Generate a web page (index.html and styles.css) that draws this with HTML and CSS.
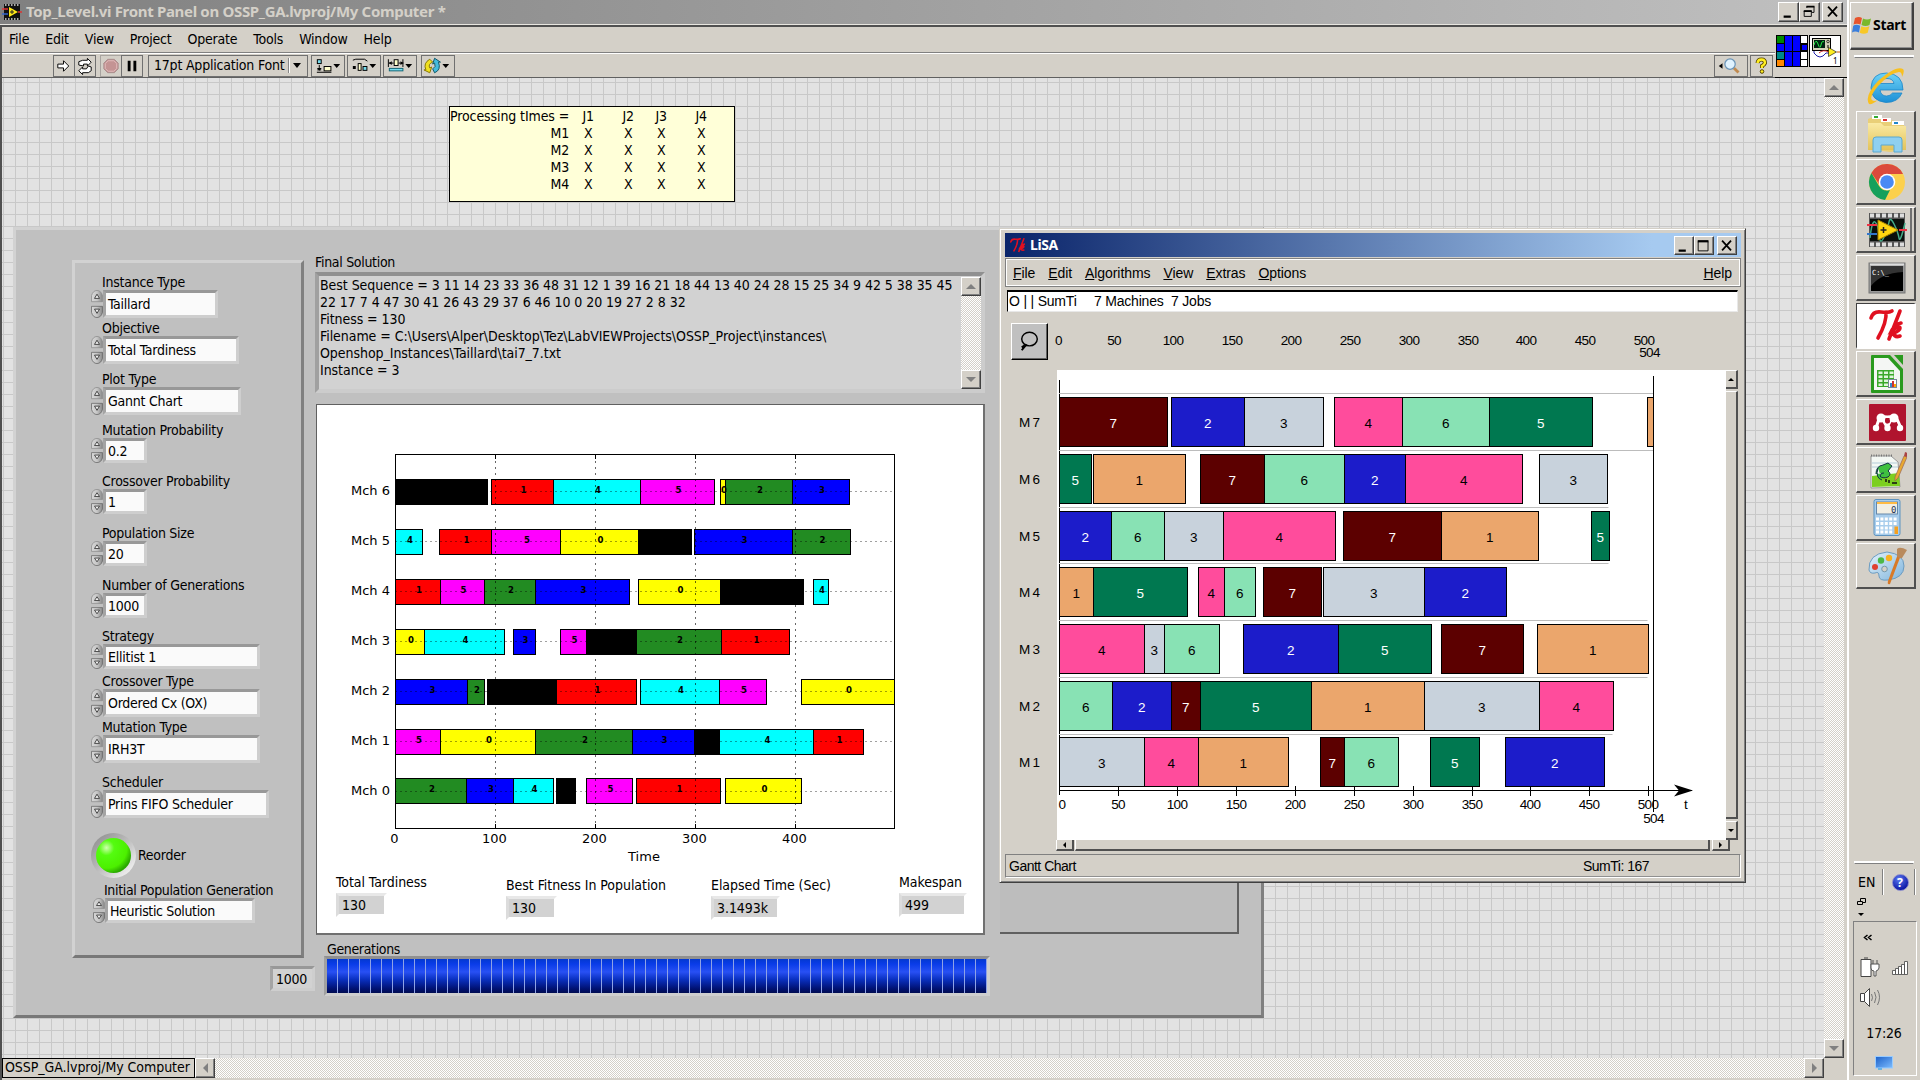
FILE: index.html
```html
<!DOCTYPE html>
<html lang="en">
<head>
<meta charset="utf-8">
<title>Top_Level.vi Front Panel</title>
<link rel="stylesheet" href="styles.css">
</head>
<body>
<svg width="0" height="0" class="defs">
  <defs>
    <linearGradient id="spin" x1="0" x2="1" y1="0" y2="0"><stop offset="0" stop-color="#d8d8d8"/><stop offset=".5" stop-color="#c6c6c6"/><stop offset="1" stop-color="#868686"/></linearGradient>
    <linearGradient id="ie" x1="0" x2="0" y1="0" y2="1"><stop offset="0" stop-color="#6fd3f7"/><stop offset="1" stop-color="#1b8fd6"/></linearGradient>
    <linearGradient id="fold" x1="0" x2="0" y1="0" y2="1"><stop offset="0" stop-color="#faeaa4"/><stop offset="1" stop-color="#e3c35a"/></linearGradient>
    <linearGradient id="blue" x1="0" x2="1" y1="0" y2="1"><stop offset="0" stop-color="#e4f3fc"/><stop offset="1" stop-color="#7fb4dc"/></linearGradient>
    <linearGradient id="scr" x1="0" x2="1" y1="0" y2="1"><stop offset="0" stop-color="#1c60c8"/><stop offset="1" stop-color="#7cbcff"/></linearGradient>
    <radialGradient id="qb" cx=".4" cy=".3" r=".7"><stop offset="0" stop-color="#5a78f0"/><stop offset="1" stop-color="#0810a0"/></radialGradient>
    <symbol id="spinner" viewBox="0 0 12 30" preserveAspectRatio="none">
      <path d="M.5 12.5V6Q2 .5 6 .5T11.5 6V12.5Z" fill="url(#spin)" stroke="#8c8c8c" stroke-width=".8"/>
      <path d="M.5 17.500H11.500V24Q10 29.500 6 29.500T.5 24Z" fill="url(#spin)" stroke="#666" stroke-width=".8"/>
      <path d="M3.500 9L6 4.500L8.500 9Z" fill="#eee" stroke="#333" stroke-width=".9"/>
      <path d="M3.500 20.500H8.500L6 25Z" fill="#eee" stroke="#333" stroke-width=".9"/>
    </symbol>
    <symbol id="min" viewBox="0 0 20 19"><path d="M4 14h8v2.500H4z" fill="#000"/></symbol>
    <symbol id="max" viewBox="0 0 20 19"><path d="M3.500 5v10.500h11V5z" fill="none" stroke="#000"/><path d="M3 3.500h12v2.500H3z"/></symbol>
    <symbol id="rest" viewBox="0 0 20 19"><path d="M6.500 5.500V4h8v6.500H12M3.500 9v6h8V9z" fill="none" stroke="#000"/><path d="M6 3h9v2H6zM3 8h9v2H3z"/></symbol>
    <symbol id="cls" viewBox="0 0 20 19"><path d="M4.500 4L14.500 15M14.500 4L4.500 15" stroke="#000" stroke-width="2"/></symbol>
    <symbol id="tk" viewBox="0 0 40 36">
      <path d="M4 10Q6 3 14 4T25 3M19 4Q20 14 11 30M33 3Q28 16 22 31M34 15Q28 16 25 22Q33 17 33 20T26 25Q28 30 33 28" fill="none" stroke="#e01020" stroke-width="3.600" stroke-linecap="round"/>
    </symbol>
  </defs>
</svg>

<div class="screen">
  <main class="app">
    <header class="titlebar">
      <svg class="vi" viewBox="0 0 20 18"><rect x="2" y="1" width="16" height="16" fill="#111"/><path d="M3 2h14M3 16h14" stroke="#aaa" stroke-width="2" stroke-dasharray="1.500 1.500"/><path d="M7 4v10l9-5z" fill="#ffe818"/><path d="M8 9h4M10 7v4" stroke="#222"/><path d="M0 6h6" stroke="#d33" stroke-width="1.500"/><path d="M0 11h6" stroke="#36c" stroke-width="1.500"/><path d="M16 9h4" stroke="#d33" stroke-width="1.500"/></svg>
      <h1>Top_Level.vi Front Panel on OSSP_GA.lvproj/My Computer *</h1>
      <div class="wbtns"><button><svg><use href="#min"/></svg></button><button><svg><use href="#rest"/></svg></button><button class="x"><svg><use href="#cls"/></svg></button></div>
    </header>
    <div class="bars">
      <div class="barcol">
        <nav class="menu"><span>File</span><span>Edit</span><span>View</span><span>Project</span><span>Operate</span><span>Tools</span><span>Window</span><span>Help</span></nav>
        <div class="toolbar">
          <div class="tb run"><svg viewBox="0 0 21 20"><path d="M4 8h6V4.500L15.500 10 10 15.500V12H4z" fill="#fff" stroke="#000"/></svg></div>
          <div class="tb cont"><svg viewBox="0 0 21 20"><path d="M4 9V5.500L8 4h5V2l4 4-4 4V8H9v2zM17 11v4l-3 2H8v2l-4-4 4-4v2h4l2-3z" fill="#fff" stroke="#000"/></svg></div>
          <div class="tb stop"><svg viewBox="0 0 21 20"><path d="M7 3h7l4 4v6l-4 4H7l-4-4V7z" fill="#c49494" stroke="#a88c8c"/><path d="M7.500 4.500h6l3 3v5l-3 3h-6l-3-3v-5z" fill="none" stroke="#e0bcbc"/></svg></div>
          <div class="tb pause"><svg viewBox="0 0 21 20"><path d="M6 4.500h3v11H6zM12 4.500h3v11h-3z"/></svg></div>
          <div class="tb font"><span>17pt Application Font</span><i></i><b class="dn"></b></div>
          <div class="tb w"><svg viewBox="0 0 33 20"><rect x="5.500" y="3.500" width="4" height="4" fill="#7de" stroke="#000"/><path d="M7.500 9v3m-2 2h4" stroke="#000"/><path d="M5 12h5l-2.500 3z"/><rect x="12.500" y="10.500" width="7" height="4.500" fill="#ffc" stroke="#000"/><path d="M22 8h7l-3.500 4zM5 16h15v1H5z"/></svg></div>
          <div class="tb w b"><svg viewBox="0 0 33 20"><path d="M5 4l3-1h9l3 2" fill="none" stroke="#000"/><path d="M5 10h3v3H5zM22 8h7l-3.500 4z"/><rect x="10.500" y="7.500" width="3" height="7" fill="#ffc" stroke="#000"/><rect x="15.500" y="10.500" width="4" height="4" fill="#7de" stroke="#000"/></svg></div>
          <div class="tb w c"><svg viewBox="0 0 33 20"><path d="M4.500 3v8M19.500 3v8M5 7h5m5 0h5" stroke="#000"/><path d="M5 7l3-2v4zM20 7l-3-2v4zM22 8h7l-3.500 4z"/><rect x="10.500" y="3.500" width="4" height="6" fill="#ffc" stroke="#000"/><rect x="5.500" y="12.500" width="14" height="2.500" fill="#7de" stroke="#167"/></svg></div>
          <div class="tb w d"><svg viewBox="0 0 33 20"><path d="M8 3Q1 7 4 14H2l6 3 2-6-2 1q-2-4 3-6z" fill="#f0e020" stroke="#870"/><path d="M13 17q7-3 4-11h2l-6-4-2 6 2-1q2 4-2 6z" fill="#4bd" stroke="#156"/><path d="M21 8h7l-3.500 4z"/></svg></div>
          <div class="tb find"><svg viewBox="0 0 34 20"><path d="M4 10l4-3v6z"/><path d="M20 12l5 5" stroke="#c08a50" stroke-width="3"/><circle cx="16" cy="8" r="5.500" fill="#dff2ff" stroke="#6a94b8" stroke-width="1.300"/></svg></div>
          <div class="tb help"><svg viewBox="0 0 21 20"><path d="M6.500 7Q7 3.500 10.500 3.500T14 7Q13 9 11 10V12" fill="none" stroke="#554400" stroke-width="4"/><path d="M6.500 7Q7 3.500 10.500 3.500T14 7Q13 9 11 10V12" fill="none" stroke="#ffee20" stroke-width="2.300"/><circle cx="11" cy="15.500" r="1.800" fill="#fe2" stroke="#540"/></svg></div>
        </div>
      </div>
      <div class="panes">
        <svg viewBox="0 0 32 32"><rect width="32" height="32"/><path d="M1 1h7v7H1z" fill="#080"/><path d="M1 9h7v7H1zM9 1h7v15H9zM17 1h7v15h-7zM9 17h7v14H9zM17 17h7v14h-7z" fill="#00f"/><path d="M1 17h7v7H1z" fill="#088"/><path d="M1 25h7v6H1z" fill="#f80"/><path d="M25 1h6v7h-6zM25 17h6v7h-6zM25 25h6v6h-6z" fill="#fff"/><path d="M26 10h5v5h-5z" fill="#00f"/></svg>
        <svg viewBox="0 0 32 32"><rect x=".5" y=".5" width="31" height="31" fill="#fff" stroke="#000"/><rect x="3.500" y="3.500" width="18" height="12" fill="#d2d2b8" stroke="#000"/><rect x="5" y="5" width="11" height="8" fill="#021"/><path d="M5 10q2-7 4-1t3 1 3-3" fill="none" stroke="#2e4"/><circle cx="19" cy="6.500" r="1.300" fill="none" stroke="#000" stroke-width=".7"/><path d="M19 10v3" stroke="#000"/><path d="M5 16v2q6 8 12 0h3" fill="none" stroke="#22a"/><path d="M10 18q4-4 10-1" fill="none" stroke="#c22"/><path d="M19.500 12.500v9l8-4.500z" fill="#fe2" stroke="#000" stroke-width=".6"/><path d="M28 17h3" stroke="#c50"/><text x="24" y="29" font-size="8">1</text></svg>
      </div>
    </div>

    <div class="work">
      <section class="canvas">
        <div class="note">
          <table><tr><th>Processing tImes =</th><td>J1</td><td>J2</td><td>J3</td><td>J4</td></tr>
          <tr><th>M1</th><td>X</td><td>X</td><td>X</td><td>X</td></tr><tr><th>M2</th><td>X</td><td>X</td><td>X</td><td>X</td></tr>
          <tr><th>M3</th><td>X</td><td>X</td><td>X</td><td>X</td></tr><tr><th>M4</th><td>X</td><td>X</td><td>X</td><td>X</td></tr></table>
        </div>

        <div class="panel">
          <div class="left">
            <div class="params">
              <div class="ctl"><label>Instance Type</label><div class="row tall"><svg><use href="#spinner"/></svg><div class="fld w1">Taillard</div></div></div>
              <div class="ctl"><label>Objective</label><div class="row tall"><svg><use href="#spinner"/></svg><div class="fld w2">Total Tardiness</div></div></div>
              <div class="ctl g5"><label>Plot Type</label><div class="row tall"><svg><use href="#spinner"/></svg><div class="fld w3">Gannt Chart</div></div></div>
              <div class="ctl g5"><label>Mutation Probability</label><div class="row"><svg><use href="#spinner"/></svg><div class="fld w4">0.2</div></div></div>
              <div class="ctl g8"><label>Crossover Probability</label><div class="row"><svg><use href="#spinner"/></svg><div class="fld w4">1</div></div></div>
              <div class="ctl g9"><label>Population Size</label><div class="row"><svg><use href="#spinner"/></svg><div class="fld w4">20</div></div></div>
              <div class="ctl g9"><label>Number of Generations</label><div class="row"><svg><use href="#spinner"/></svg><div class="fld w4">1000</div></div></div>
              <div class="ctl g8"><label>Strategy</label><div class="row"><svg><use href="#spinner"/></svg><div class="fld w5">Ellitist 1</div></div></div>
              <div class="ctl g2"><label>Crossover Type</label><div class="row tall"><svg><use href="#spinner"/></svg><div class="fld w5">Ordered Cx (OX)</div></div></div>
              <div class="ctl"><label>Mutation Type</label><div class="row tall"><svg><use href="#spinner"/></svg><div class="fld w5">IRH3T</div></div></div>
              <div class="ctl g9"><label>Scheduler</label><div class="row tall"><svg><use href="#spinner"/></svg><div class="fld w6">Prins FIFO Scheduler</div></div></div>
              <div class="ledrow"><i class="led"></i><span>Reorder</span></div>
              <div class="ctl last"><label>Initial Population Generation</label><div class="row"><svg><use href="#spinner"/></svg><div class="fld w7">Heuristic Solution</div></div></div>
            </div>
            <div class="ind count">1000</div>
          </div>
          <div class="mid">
            <label class="fs">Final Solution</label>
            <div class="sol">
              <p>Best Sequence = 3 11 14 23 33 36 48 31 12 1 39 16 21 18 44 13 40 24 28 15 25 34 9 42 5 38 35 45<br>22 17 7 4 47 30 41 26 43 29 37 6 46 10 0 20 19 27 2 8 32<br>Fitness = 130<br>Filename = C:\Users\Alper\Desktop\Tez\LabVIEWProjects\OSSP_Project\instances\<br>Openshop_Instances\Taillard\tai7_7.txt<br>Instance = 3</p>
              <div class="vs"><button><b class="up"></b></button><button><b class="down"></b></button></div>
            </div>
            <div class="plot">
              <svg id="mch" viewBox="317 405 666 467" width="666" height="467"></svg>
              <div class="inds">
                <div><label>Total Tardiness</label><div class="ind">130</div></div>
                <div><label>Best Fitness In Population</label><div class="ind">130</div></div>
                <div><label>Elapsed Time (Sec)</label><div class="ind e">3.1493k</div></div>
                <div><label>Makespan</label><div class="ind m">499</div></div>
              </div>
            </div>
            <label class="gen">Generations</label>
            <div class="prog"><div></div></div>
          </div>
          <div class="sub"></div>
        </div>
      </section>
      <div class="vs side"><button><b class="up"></b></button><button><b class="down"></b></button></div>
    </div>
    <footer class="foot">
      <div class="tgt">OSSP_GA.lvproj/My Computer</div><button><b class="lf"></b></button><div class="track"></div><button><b class="rt"></b></button><div class="corner"></div>
    </footer>

    <section class="lisa">
      <header><svg><use href="#tk"/></svg><strong>LiSA</strong><div class="wbtns"><button><svg><use href="#min"/></svg></button><button><svg><use href="#max"/></svg></button><button class="x"><svg><use href="#cls"/></svg></button></div></header>
      <nav><span><u>F</u>ile</span><span><u>E</u>dit</span><span><u>A</u>lgorithms</span><span><u>V</u>iew</span><span><u>E</u>xtras</span><span><u>O</u>ptions</span><span class="r"><u>H</u>elp</span></nav>
      <div class="entry"><span>O | | SumTi</span><span>7 Machines</span><span>7 Jobs</span></div>
      <div class="scale"><button><svg viewBox="0 0 36 36"><ellipse cx="18" cy="15.500" rx="8" ry="7" fill="none" stroke="#000" stroke-width="1.500"/><path d="M15 21l-5 6M13 22l-3 2" stroke="#000" stroke-width="2"/></svg></button><svg id="top" viewBox="1048 313 690 57" width="690" height="57"></svg></div>
      <div class="view"><svg id="gantt" viewBox="1003 370 723 470" width="723" height="470"></svg>
        <div class="lv"><i><b class="up"></b></i><em></em><i><b class="down"></b></i></div></div>
      <div class="lh"><i><b class="lf"></b></i><em></em><i><b class="rt"></b></i></div>
      <div class="status"><span>Gantt Chart</span><span>SumTi: 167</span></div>
    </section>
  </main>

  <aside class="task">
    <button class="start"><svg viewBox="0 0 20 18"><path d="M3 2q4-2 7 0L8.500 8.500q-4-1.500-7 0z" fill="#e8542c"/><path d="M11 2.500q4 2 8 0L17.500 9q-4 2-8 0z" fill="#7ab82c"/><path d="M1.200 9.800q3-2 7 0L7 16.500q-4-2-7 0z" fill="#3a7edc"/><path d="M9.300 10.300q4 2 8 0L15.700 16.800q-4 2-8 0z" fill="#f8c828"/></svg>Start</button>
    <hr>
    <svg class="ie" viewBox="0 0 40 40"><path d="M37 24H14q1 6 6.500 6 4 0 6-3h9.500Q32 36.500 20 36.500 5 35 5 21.500 6 7 20.500 7 37 8 37 24zM14 17.500h14Q27 12.500 21 12.500T14 17.500z" fill="url(#ie)" fill-rule="evenodd" stroke="#1d86c8" stroke-width=".8"/><path d="M3 38Q-2 30 12 15 30-1 37 3q2 2-1 8 0-5-3-5Q24 7 12 20 3 31 6 34 8 36 12 34 6 39 3 38z" fill="#f8c020"/></svg>
    <div class="tbt"><svg viewBox="0 0 40 40"><path d="M1 5l9-4 5 3 22 5v27l-14 2L1 35z" fill="#e9cf78"/><path d="M5 1h10v4H5z" fill="#fff"/><path d="M7 2h4v2H7z" fill="#3a3"/><path d="M14 4h10v4H14z" fill="#fff"/><path d="M16 5h4v2h-4z" fill="#d33"/><path d="M25 7h12v4H25z" fill="#fff"/><path d="M27 8h4v2h-4z" fill="#28c"/><path d="M1 9h13l3 3h22v24H1z" fill="url(#fold)"/><path d="M6 38V26q0-3 3-3h23q3 0 3 3v12h-8v-7H14v7z" fill="#8fd0f0" stroke="#5aa8d0"/></svg></div>
    <div class="tbt"><svg viewBox="0 0 40 40"><circle cx="20" cy="20" r="18" fill="#fcd04c"/><path d="M4.400 11L12 24q4 6 11 4l-5 10A18 18 0 0 1 4.400 11z" fill="#16a05c"/><path d="M4.400 11A18 18 0 0 1 36 12H20q-7 1-8 10z" fill="#db4a3c"/><circle cx="20" cy="20" r="8.300" fill="#fff"/><circle cx="20" cy="20" r="6.800" fill="#4a8af4"/></svg></div>
    <div class="tbt grp"><svg viewBox="0 0 40 40"><path d="M2 3h36v34H2z" fill="#555"/><path d="M3 5.500h34M3 34.500h34" stroke="#ddd" stroke-width="4" stroke-dasharray="4 2"/><path d="M3 9h34v22H3z" fill="#0a0f0c"/><path d="M3 28q2-18 5-16t4 13 5 2 5-15 5 2 5 14 6-15" fill="none" stroke="#4a8" stroke-width="1.500"/><path d="M11 10v20l20-10z" fill="#ffd610" stroke="#a80"/><path d="M13.500 20h6m-3-3v6" stroke="#222" stroke-width="1.500"/><path d="M0 15h10M32 20h8" stroke="#e34" stroke-width="2"/><path d="M0 24h10" stroke="#37c" stroke-width="2"/></svg></div>
    <div class="tbt"><svg viewBox="0 0 40 40"><rect x="2" y="5" width="36" height="30" fill="#999" stroke="#777"/><rect x="4" y="8" width="32" height="25"/><path d="M4 8h32v6Q14 15 4 28z" fill="#333"/><path d="M3 6.500h34" stroke="#ddd" stroke-width="2"/><text x="5" y="17" font-size="7" fill="#fff" class="mono">C:\_</text></svg></div>
    <div class="tbt on"><svg viewBox="0 0 40 36"><use href="#tk"/></svg></div>
    <div class="tbt"><svg viewBox="0 0 40 40"><path d="M5 1h18l13 14v24H5q-1 0-1-1V2q0-1 1-1z" fill="#2a9a1e"/><path d="M7 4h14l12 13v19H7z" fill="#f4f6f4"/><path d="M27 1h9v10z" fill="#2a9a1e"/><path d="M10 16h17v17H10z" fill="#3aa82a"/><path d="M11.500 17.500h4v2.500h-4zM17 17.500h4v2.500h-4zM22.500 17.500h4v2.500h-4zM11.500 21.500h4V24h-4zM17 21.500h4V24h-4zM22.500 21.500h4V24h-4zM11.500 25.500h4V28h-4zM17 25.500h4V28h-4zM11.500 29.500h4V32h-4zM17 29.500h4V32h-4z" fill="#dff4dc"/><rect x="21.500" y="25.500" width="8" height="8" fill="#fff" stroke="#789"/><path d="M23 29h2v4h-2z" fill="#38c"/><path d="M25 27h2v6h-2z" fill="#c33"/><path d="M27 30h2v3h-2z" fill="#fa0"/></svg></div>
    <div class="tbt"><svg viewBox="0 0 40 40"><rect x="2" y="2" width="37" height="37" rx="1" fill="#b0142e"/><path d="M9 26l3-9M20 25l-5-9M20 25l5-9M34 26l-4-9" stroke="#fff" stroke-width="3"/><circle cx="14" cy="16" r="4.500" fill="#fff"/><circle cx="27" cy="16" r="4.500" fill="#fff"/><path d="M14 12q6 3 13 0v4H14z" fill="#fff"/><circle cx="20.500" cy="19" r="2.500" fill="#b0142e"/><circle cx="9" cy="26" r="3.200" fill="#fff"/><circle cx="20.500" cy="26" r="3.200" fill="#fff"/><circle cx="33" cy="26" r="3.200" fill="#fff"/></svg></div>
    <div class="tbt"><svg viewBox="0 0 40 40"><path d="M4 6h20l7 6 2 25L4 38z" fill="#f4f8f4" stroke="#999"/><path d="M5 13h25M5 17h26" stroke="#9bc" stroke-width=".7"/><path d="M5 26l27-3 1 13-28 1z" fill="#7ccf20"/><path d="M4 5.500h21" stroke="#777" stroke-width="2" stroke-dasharray="1 1.500"/><path d="M9 24q0-8 7-9l5-2 4 3-4 5q4 3 0 6-6 2-8-1 1-4 4-3M11 18q-3 10 4 12" fill="#3fc040" stroke="#134"/><path d="M19 32v-3m3 4v-3m3 3h5" stroke="#111" stroke-width="1.500"/><path d="M28 27L37 6l3 1-9 21-3 3z" fill="#e8a830" stroke="#965" stroke-width=".7"/><path d="M37 6l1-4 3 1-1 4z" fill="#a44"/></svg></div>
    <div class="tbt"><svg viewBox="0 0 40 40"><rect x="7" y="1.500" width="26" height="36" rx="2" fill="#a8cdec" stroke="#5d93c0"/><rect x="9.500" y="4" width="21" height="12" fill="#f2efe4" stroke="#68a"/><path d="M10 5h20" stroke="#fb4" stroke-width="2"/><text x="24" y="15" font-size="9" fill="#235" class="mono">0</text><path d="M9 21h22M9 25.500h22M9 30h17M9 34h17" stroke="#fff" stroke-width="2.800" stroke-dasharray="3 1.400"/><path d="M27.500 28.500h3.500V36h-3.500z" fill="#f5a020"/></svg></div>
    <div class="tbt"><svg viewBox="0 0 40 40"><path d="M2 24Q1 8 20 6q17 2 17 14 0 12-16 14-9 1-9-4t-4-3q-5 1-6-3z" fill="url(#blue)" stroke="#6d9cc0"/><circle cx="17.500" cy="23" r="2.800" fill="#d4d0c8" stroke="#79a"/><circle cx="8" cy="21" r="3" fill="#e04030"/><circle cx="14" cy="14.500" r="3.200" fill="#4cb848"/><circle cx="22" cy="12" r="3.200" fill="#f8b020"/><path d="M34 9L23 38q-3 1-2-3L31 8z" fill="#d87a28"/><path d="M30 3q3-3 10 1l-5 8q-3 1-5-2z" fill="#b98a5c"/></svg></div>
    <div class="grow"></div>
    <hr>
    <div class="lang"><span>EN</span><i></i><svg viewBox="0 0 20 20"><circle cx="10" cy="10" r="8.500" fill="url(#qb)" stroke="#99c"/><text x="6.200" y="15" font-size="13" font-weight="bold" fill="#fff">?</text></svg><i class="e"></i></div>
    <svg class="mini" viewBox="0 0 12 22"><path d="M3.500 3V.5h5v4H6M.5 3.500h5v3h-5z" fill="none" stroke="#000"/><path d="M1 15h6l-3 3z"/></svg>
    <div class="tray">
      <svg viewBox="0 0 64 92" width="64" height="92"><path d="M14.500 13l-3 2.500 3 2.500M18.500 13l-3 2.500 3 2.500" fill="none" stroke="#000" stroke-width="1.500"/>
        <path d="M8 37.500h10v17H8zM11 36h4" fill="#fff" stroke="#444"/><path d="M18 42h8v4q-1 3-3 3v5h-2v-5q-3 0-3-3zM20 42v-4m4 4v-4" fill="#fff" stroke="#555"/>
        <path d="M39.500 48.500h3v4h-3zM42.500 46.500h3v6h-3zM45.500 44.500h3v8h-3zM48.500 42.500h3v10h-3zM51.500 39.500h3v13h-3z" fill="#fff" stroke="#555" stroke-width=".9"/>
        <path d="M7.500 71.500h4l5-5v18l-5-5h-4zM11.500 71.500v8" fill="#fff" stroke="#444"/><path d="M18.500 72q2 4 0 7M21.500 70q3 5 0 11M24.500 68q4 7 0 15" fill="none" stroke="#777"/></svg>
      <time>17:26</time>
      <svg class="mon" viewBox="0 0 18 14"><rect x=".5" y=".5" width="17" height="11.500" fill="url(#scr)" stroke="#9cf"/><path d="M3 13h4" stroke="#4ae" stroke-width="1.500"/></svg>
    </div>
  </aside>
</div>
<script src="charts.js"></script>
</body>
</html>
```
FILE: styles.css
```css
* { box-sizing: border-box; }
body { margin: 0; overflow: hidden; font: 14px/17px "DejaVu Sans Condensed", "Noto Sans", sans-serif; letter-spacing: -.05px; color: #000; background: #d4d0c8; }
button { padding: 0; margin: 0; font: inherit; }
h1, p { margin: 0; }
.defs { position: absolute; }
.screen { display: flex; width: 1920px; height: 1080px; }
.app { position: relative; width: 1848px; height: 1080px; display: flex; flex-direction: column; border-right: 1px solid #fff; box-shadow: inset 2px 0 #505050; }

/* raised push button used by title bars and scroll bars */
.wbtns button, .vs button, .foot button { display: grid; place-items: center; background: #d4d0c8; border: 1px solid; border-color: #fff #404040 #404040 #fff; box-shadow: inset -1px -1px #808080; }
.titlebar { height: 25px; flex: none; display: flex; align-items: center; background: linear-gradient(90deg, #808080, #c0c0c0); padding: 0 4px 0 2px; border-bottom: 1px solid #e8e6e0; }
.vi { width: 20px; height: 18px; }
.titlebar h1 { font: bold 15px/20px "Noto Sans", sans-serif; color: #d4d0c8; margin: 0 0 2px 4px; letter-spacing: -.32px; flex: 1; white-space: nowrap; }
.wbtns { display: flex; }
.wbtns button { width: 20px; height: 19px; }
.wbtns svg { width: 18px; height: 17px; display: block; }
.wbtns .x { margin-left: 3px; }
.titlebar .wbtns button { width: 21px; height: 20px; margin-bottom: 1px; }
.titlebar .wbtns .x { margin-left: 2px; }

.bars { display: flex; height: 53px; flex: none; margin-left: 2px; border-top: 2px solid #505050; background: #d4d0c8; }
.barcol { flex: 1; display: flex; flex-direction: column; }
.menu { height: 26px; display: flex; gap: 16px; padding: 2px 0 0 7px; line-height: 20px; letter-spacing: -.2px; border-bottom: 1px solid #808080; }
.toolbar { height: 25px; display: flex; align-items: center; padding: 0 2px 0 51px; border-top: 1px solid #fff; border-bottom: 1px solid #606060; }
.tb { height: 22px; width: 22px; border: 1px solid #707070; display: flex; align-items: center; }
.tb svg { width: 100%; height: 20px; }
.cont, .pause { margin-left: -1px; }
.stop { margin-left: 4px; border-color: #a8a4a0; }
.font { width: 160px; margin-left: 5px; padding: 0 6px 0 5px; letter-spacing: -.2px; }
.font span { flex: 1; white-space: nowrap; }
.font i { width: 1px; height: 15px; background: #888; box-shadow: 1px 0 #fff; }
.dn { border: 4px solid transparent; border-top: 5px solid #000; border-bottom: 0; margin-left: 4px; }
.w { width: 34px; margin-left: 3px; }
.w.b, .w.c { margin-left: 2px; }
.w.d { margin-left: 4px; }
.find { width: 34px; margin-left: auto; }
.help { margin-left: 2px; width: 23px; }
.panes { width: 72px; display: flex; gap: 1px; padding: 8px 0 0 1px; border-bottom: 1px solid #000; }
.panes svg { width: 32px; height: 32px; }

.work { flex: 1; display: flex; min-height: 0; }
.canvas { flex: 1; position: relative; background: repeating-linear-gradient(90deg, transparent 0 3px, #c8c8c8 3px 4px, transparent 4px 12px), repeating-linear-gradient(180deg, transparent 0 4px, #c8c8c8 4px 5px, transparent 5px 12px), #e2e2e2; border-left: 2px solid #505050; background-origin: border-box; }
.vs { display: flex; flex-direction: column; justify-content: space-between; background: repeating-conic-gradient(#d4d0c8 0 25%, #fff 0 50%) 0 0/2px 2px; }
.vs button { width: 100%; height: 20px; }
.side { width: 20px; margin-right: 3px; }
.up, .down, .lf, .rt { border: 5px solid transparent; }
.up { border-bottom-color: #808080; border-top: 0; }
.down { border-top-color: #808080; border-bottom: 0; }
.lf { border-right-color: #808080; border-left: 0; }
.rt { border-left-color: #808080; border-right: 0; }
.foot { height: 22px; flex: none; display: flex; margin: 0 3px 0 2px; padding-bottom: 2px; }
.tgt { width: 193px; border: 1px solid #000; padding: 0 2px; line-height: 17px; white-space: nowrap; }
.foot button { width: 20px; height: 20px; }
.track { flex: 1; background: repeating-conic-gradient(#d4d0c8 0 25%, #fff 0 50%) 0 0/2px 2px; }
.corner { width: 20px; }

.note { position: absolute; left: 447px; top: 28px; width: 286px; height: 96px; padding-top: 1px; border: 1px solid #000; background: #ffffd8; }
.note table { border-collapse: collapse; table-layout: fixed; letter-spacing: -.1px; }
.note th { font-weight: 400; text-align: right; padding: 0; width: 118px; height: 17px; white-space: nowrap; }
.note td { padding: 0; text-align: center; width: 38px; }
.note td:nth-child(3) { width: 42px; }
.note td:nth-child(4) { width: 24px; }
.note td:nth-child(5) { width: 56px; }

.panel { position: absolute; left: 11px; top: 149px; width: 1251px; height: 791px; display: flex; background: #c0c0c0; border: 3px solid; border-color: #d2d2d2 #808080 #787878 #d2d2d2; }
.left { width: 297px; flex: none; padding: 30px 0 0 56px; display: flex; flex-direction: column; letter-spacing: -.25px; }
.params { width: 232px; height: 698px; border: 3px solid; border-color: #d2d2d2 #808080 #787878 #d2d2d2; padding: 9px 0 0 16px; }
.ctl label { display: block; height: 18px; line-height: 20px; padding-left: 11px; white-space: nowrap; }
.row { display: flex; height: 25px; }
.row.tall { height: 28px; }
.row svg { width: 12px; height: 100%; overflow: visible; }
.fld, .ind { background: #fafafa; border: 3px solid; border-color: #989898 #cecece #cecece #a4a4a4; padding: 1px 0 0 2px; display: flex; align-items: center; white-space: nowrap; }
.w1 { width: 115px; } .w2 { width: 136px; } .w3 { width: 138px; } .w4 { width: 44px; } .w5 { width: 157px; } .w6 { width: 166px; } .w7 { width: 150px; }
.g2 { margin-top: 2px; } .g5 { margin-top: 5px; } .g8 { margin-top: 8px; } .g9 { margin-top: 9px; }
.ledrow { display: flex; align-items: center; height: 45px; margin-top: 15px; gap: 2px; }
.led { width: 45px; height: 45px; border-radius: 50%; border: 5px solid transparent; background: radial-gradient(circle at 30% 28%, #d0ffb0 0, #54fc10 22%, #4cf000 58%, #2aa800 75%) padding-box, linear-gradient(135deg, #888, #b8b8b8 45%, #fff) border-box; }
.last { margin: 2px 0 0 2px; letter-spacing: -.35px; }
.ind { background: #d2d2d2; }
.count { width: 45px; height: 25px; margin: 8px 0 0 198px; padding-left: 3px; }
.mid { width: 690px; flex: none; padding-top: 23px; }
.fs { display: block; line-height: 18px; margin-left: 2px; letter-spacing: -.3px; }
.sol { width: 670px; height: 121px; margin: 1px 0 0 2px; display: flex; background: #d2d2d2; border: 4px solid; border-color: #909090 #cccccc #cccccc #a0a0a0; }
.sol p { flex: 1; padding: 1px 0 0 1px; white-space: nowrap; }
.vs button { height: 19px; }
.sol .vs { width: 20px; height: 112px; margin-top: 1px; }
.plot { margin: 11px 0 0 3px; width: 669px; height: 531px; background: #fff; border: 1px solid #606060; border-right: 2px solid #707070; border-bottom: 2px solid #707070; }
.plot > svg { display: block; }
.inds { display: grid; grid-template-columns: 170px 205px 188px auto; padding: 2px 0 0 19px; white-space: nowrap; }
.inds .ind { width: 51px; height: 24px; margin-top: 2px; padding-left: 3px; border-color: #e8e8e8 #fff #fff #dcdcdc; }
.inds > div:nth-child(2), .inds > div:nth-child(3) { padding-top: 3px; }
.inds .e { width: 69px; }
.inds .m { width: 68px; }
.inds label { display: block; }
.gen { display: block; margin: 7px 0 0 14px; line-height: 14px; letter-spacing: -.35px; }
.prog { margin-left: 11px; width: 666px; height: 40px; border: 3px solid; border-color: #909090 #cecece #cecece #a0a0a0; }
.prog div { height: 100%; background: repeating-linear-gradient(90deg, transparent 0 10px, #8fa2e6 10px 11px), linear-gradient(#0338d0, #0a3ce8 15%, #2850f4 38%, #0a30c0 60%, #001070 88%, #000c50); }
.sub { width: 239px; height: 704px; background: #bdbdbd; border-right: 2px solid #606060; border-bottom: 2px solid #606060; margin-left: -3px; }

.lisa { position: absolute; left: 999px; top: 228px; width: 747px; height: 655px; background: #d4d0c8; border: 1px solid; border-color: #d4d0c8 #404040 #404040 #d4d0c8; box-shadow: inset 1px 1px #fff, inset -1px -1px #808080; padding: 4px 4px 4px 5px; display: flex; flex-direction: column; font-family: "Liberation Sans", Arial, sans-serif; letter-spacing: 0; }
.lisa header { height: 24px; flex: none; display: flex; align-items: center; padding: 0 4px 0 4px; background: linear-gradient(90deg, #0a246a, #a6caf0 88%); color: #fff; }
.lisa header > svg { width: 18px; height: 17px; }
.lisa strong { flex: 1; margin-left: 3px; font: bold 14px/18px "Noto Sans", sans-serif; letter-spacing: -.4px; }
.lisa nav { height: 29px; flex: none; margin-top: 1px; display: flex; align-items: center; gap: 13px; padding: 2px 8px 0 7px; border: 1px solid #808080; box-shadow: inset 1px 1px #fff, inset -1px -1px #fff; letter-spacing: -.08px; }
.lisa nav .r { margin-left: auto; }
.entry { height: 22px; flex: none; margin: 3px 3px 0 2px; display: flex; align-items: center; padding-left: 1px; background: #fff; border: 1px solid; border-color: #000 #e8e8e8 #e8e8e8 #000; border-top-width: 2px; letter-spacing: -.2px; }
.entry span:nth-child(1) { width: 85px; }
.entry span:nth-child(2) { width: 77px; }
.scale { height: 58px; flex: none; display: flex; padding: 1px 0 0 6px; }
.scale button { width: 37px; height: 37px; margin-top: 10px; background: #c0c0c0; border: 1px solid; border-color: #fff #000 #000 #fff; box-shadow: inset -1px -1px #606060; }
.scale button svg { width: 35px; height: 35px; display: block; }
.view { height: 470px; flex: none; display: flex; margin-left: -2px; }
.view > svg { display: block; flex: none; }
.lv { width: 12px; display: flex; flex-direction: column; }
.lv i, .lv em { border-right: 2px solid #505050; border-bottom: 2px solid #505050; border-top: 1px solid #fff; display: grid; place-items: center; }
.lv i { height: 19px; width: 100%; }
.lv b, .lh b { border-width: 3px; }
.lv .up { border-bottom-color: #000; border-top: 0; } .lv .down { border-top-color: #000; border-bottom: 0; }
.lv em { flex: 1; margin: 2px 0; }
.lh { height: 12px; flex: none; display: flex; margin: 0 11px 0 51px; }
.lh i { width: 18px; }
.lh i, .lh em { height: 11px; border-right: 2px solid #505050; border-bottom: 2px solid #505050; border-left: 1px solid #fff; display: grid; place-items: center; }
.lh em { flex: 1; margin: 0 2px 0 1px; }
.lh .lf { border-right-color: #000; border-left: 0; } .lh .rt { border-left-color: #000; border-right: 0; }
.status { height: 24px; flex: none; margin-top: 2px; border: 1px solid; border-color: #808080 #fff #fff #808080; display: flex; align-items: center; padding-left: 3px; box-shadow: inset -1px -1px #909090; letter-spacing: -.5px; }
.status span:first-child { width: 574px; }

.task { width: 72px; display: flex; flex-direction: column; background: #d4d0c8; border-left: 1px solid #fff; padding: 2px 4px 4px 1px; }
.start { width: 64px; height: 48px; display: flex; align-items: center; gap: 1px; padding: 0 0 2px 1px; background: #d4d0c8; border: 1px solid; border-color: #fff #404040 #404040 #fff; border-right-width: 2px; border-bottom-width: 2px; box-shadow: inset -1px -1px #909090; font: bold 14px/18px "Noto Sans", sans-serif; letter-spacing: -.3px; }
.start svg { width: 20px; height: 18px; flex: none; }
hr { width: 60px; height: 3px; margin: 5px 0 0 4px; border: 1px solid; border-color: #fff #fff #808080 #fff; background: #fff; flex: none; }
.ie { width: 40px; height: 40px; margin: 8px 0 5px 16px; flex: none; }
.tbt { width: 60px; height: 46px; margin: 0 0 2px 6px; flex: none; padding: 2px 0 0 10px; border: 1px solid; border-color: #fff #505050 #505050 #fff; border-bottom-width: 2px; border-right-width: 2px; }
.tbt svg { width: 40px; height: 40px; display: block; }
.grp { box-shadow: inset -2px 0 #d4d0c8, inset -4px 0 #707070; }
.on { background: #fff; border-color: #404040 #fff #fff #404040; }
.grow { flex: 1; }
.lang { display: flex; align-items: center; height: 26px; margin: 5px 0 0 8px; flex: none; }
.lang span { width: 24px; }
.lang i { width: 2px; height: 26px; border-left: 1px solid #808080; border-right: 1px solid #fff; margin-right: 7px; }
.lang svg { width: 19px; height: 19px; margin-right: 4px; }
.lang .e { margin: 0; }
.mini { width: 12px; height: 22px; margin: 3px 0 0 7px; flex: none; }
.tray { margin: 1px -1px 0 3px; width: 64px; height: 155px; flex: none; border: 1px solid; border-color: #808080 #fff #fff #808080; display: flex; flex-direction: column; align-items: center; }
.tray > svg { flex: none; }
.tray time { margin: 11px 2px 0 0; letter-spacing: -.2px; }
.tray .mon { width: 18px; height: 14px; margin: 14px 3px 0 0; }
svg text { font-family: "Noto Sans", sans-serif; letter-spacing: 0; }
svg .mono { font-family: "DejaVu Sans Mono", monospace; }
#mch text { font: 13px "DejaVu Sans", sans-serif; }
#mch .n { font: bold 9.500px "DejaVu Sans Condensed", "DejaVu Sans", sans-serif; }
#gantt text, #top text { font: 13.500px "Liberation Sans", sans-serif; letter-spacing: -.7px; }
```
FILE: charts.js
```js
const el = (p, tag, attrs, text) => {
  const n = document.createElementNS('http://www.w3.org/2000/svg', tag);
  for (const k in attrs) n.setAttribute(k, attrs[k]);
  if (text !== undefined) n.textContent = text;
  p.appendChild(n);
};
const line = (p, x1, y1, x2, y2, o = {}) => el(p, 'line', { x1, y1, x2, y2, stroke: '#000', ...o });

// Machine plot: [job, start, end]; job 6 is drawn black without a number
const plot = document.getElementById('mch');
const jobs = ['#ffff00', '#ff0000', '#228b22', '#0000ff', '#00ffff', '#ff00ff', '#000000'];
const machines = [
  [[2,0,71],[3,71,118],[4,118,158],[6,161,180],[5,191,237],[1,241,325],[0,330,406]],
  [[5,0,45],[0,45,140],[2,140,237],[3,237,299],[6,299,324],[4,324,418],[1,418,468]],
  [[3,0,72],[2,72,89],[6,92,161],[1,161,241],[4,245,324],[5,324,371],[0,406,499]],
  [[0,0,29],[4,29,109],[3,118,140],[5,165,191],[6,191,241],[2,241,326],[1,326,394]],
  [[1,0,45],[5,45,89],[2,89,140],[3,140,234],[0,243,325],[6,325,408],[4,418,433]],
  [[4,0,27],[1,44,96],[5,96,165],[0,165,243],[6,243,296],[3,299,397],[2,397,455]],
  [[6,0,92],[1,96,158],[4,158,245],[5,245,319],[0,325,330],[2,330,397],[3,397,454]]
];
const X0 = 395.5;
machines.forEach((bars, i) => {
  const y = 791.5 - 50 * i;
  const by = i ? y : y - 1;
  bars.forEach(([j, a, b]) => el(plot, 'rect', { x: X0 + a, y: by - 12, width: b - a, height: 25, fill: jobs[j], stroke: '#000' }));
  line(plot, X0, y, 894.5, y, { 'stroke-dasharray': '1 4', 'stroke-opacity': .75 });
  bars.forEach(([j, a, b]) => j < 6 && el(plot, 'text', { x: X0 + (a + b) / 2 + 1, y: by + 1, class: 'n', 'text-anchor': 'middle' }, j));
  el(plot, 'text', { x: 390, y: y + 3, 'text-anchor': 'end' }, 'Mch ' + i);
});
for (let t = 0; t < 500; t += 100) {
  if (t) {
    line(plot, X0 + t, 455, X0 + t, 828, { 'stroke-dasharray': '2 4', 'stroke-opacity': .6 });
    line(plot, X0 + t, 455, X0 + t, 459);
    line(plot, X0 + t, 824, X0 + t, 828);
  }
  el(plot, 'text', { x: X0 + t - 1, y: 843, 'text-anchor': 'middle' }, t);
}
el(plot, 'rect', { x: X0, y: 454.5, width: 499, height: 374, fill: 'none', stroke: '#000' });
el(plot, 'text', { x: 644, y: 861, 'text-anchor': 'middle' }, 'Time');

// Gantt view: [job, start, end]
const g = document.getElementById('gantt'), top_ = document.getElementById('top');
const fills = { 1: '#eba66c', 2: '#1c1cca', 3: '#c8d2dc', 4: '#ff4c9c', 5: '#007850', 6: '#88e2b4', 7: '#5c0000' };
const rows = [
  [7, 397.5, 393.5, 504, [[7,0,92],[2,94.7,156.8],[3,156.8,223.8],[4,233.7,290.9],[6,290.9,364.9],[5,364.9,452],[1,498.6,504]]],
  [6, 454.5, 450.5, 504, [[5,0,27.2],[1,28.5,107],[7,119.4,173.7],[6,173.7,242],[2,242,293.8],[4,293.8,392.5],[3,406.9,465.3]]],
  [5, 511.5, 507.5, 466, [[2,0,44.5],[6,44.5,88.9],[3,88.9,139.5],[4,139.5,234.1],[7,240.7,324.2],[1,324.2,406],[5,451.7,466.9]]],
  [4, 567.5, 563.5, 466, [[1,0,28.9],[5,28.9,109],[4,117.7,140],[6,140,166.3],[7,172.8,222.6],[3,223.6,309.8],[2,309.8,378.9]]],
  [3, 624.5, 620.5, 498.5, [[4,0,72],[3,72,89],[6,89,135.8],[2,156.4,236.6],[5,236.6,315.6],[7,323.8,393.3],[1,405.2,499.4]]],
  [2, 681.5, 677.5, 498.5, [[6,0,45],[2,45,95],[7,95,119.8],[5,119.8,214],[1,214,309.4],[3,309.4,407.3],[4,407.3,469.8]]],
  [1, 737.5, 734.5, 469, [[3,0,71.7],[4,71.7,118],[1,118,194.5],[7,221.4,242],[6,242,288],[5,315,356.7],[2,378,462]]]
];
const px = t => Math.round(1059 + t * 1.1786) + .5;
el(g, 'rect', { x: 1057, y: 370, width: 669, height: 470, fill: '#fff' });
line(g, 1059.5, 380, 1059.5, 795);
rows.forEach(([m, y, ly, end, bars]) => {
  line(g, 1059, ly, px(end), ly, { stroke: '#bcbcbc' });
  bars.forEach(([j, a, b]) => {
    el(g, 'rect', { x: px(a), y, width: px(b) - px(a), height: 49, fill: fills[j], stroke: '#000' });
    if (b - a > 8) el(g, 'text', { x: (px(a) + px(b)) / 2 - .5, y: y + 30, 'text-anchor': 'middle', fill: [2, 5, 7].includes(j) ? '#fff' : '#000' }, j);
  });
  el(g, 'text', { x: 1019, y: y + 29.5 }, 'M ' + m);
});
line(g, 1653.5, 376, 1653.5, 812);
line(g, 1059, 790.5, 1692, 790.5);
el(g, 'path', { d: 'M1693 790.5L1674 784.5L1679 790.5L1674 796.5Z' });
for (let t = 0; t <= 500; t += 50) {
  if (t) line(g, px(t), 786, px(t), 796);
  el(g, 'text', { x: t ? px(t) - .5 : 1062, y: 809, 'text-anchor': 'middle' }, t);
  el(top_, 'text', { x: t ? px(t) - 4.5 : 1058.5, y: 345, 'text-anchor': 'middle' }, t);
}
el(g, 'text', { x: 1653.5, y: 823, 'text-anchor': 'middle' }, 504);
el(g, 'text', { x: 1684, y: 809 }, 't');
el(top_, 'text', { x: 1649.5, y: 357, 'text-anchor': 'middle' }, 504);
```
